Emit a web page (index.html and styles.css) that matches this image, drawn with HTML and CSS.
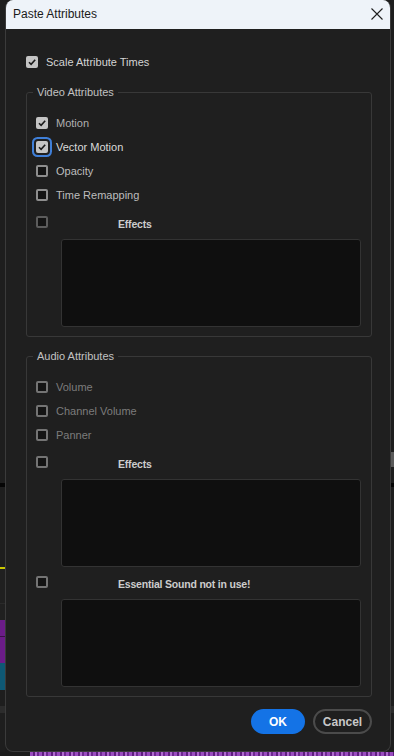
FILE: index.html
```html
<!DOCTYPE html>
<html lang="en">
<head>
    <meta charset="UTF-8">
    <meta name="viewport" content="width=device-width, initial-scale=1.0">
    <title>Paste Attributes</title>
    <link rel="stylesheet" href="styles.css">
</head>
<body>
    <div class="screen">
        <div class="edge edge-left"></div>

        <div class="dialog">
            <div class="titlebar">
                <span class="title">Paste Attributes</span>
                <button class="close" aria-label="Close">
                    <svg width="12" height="12" viewBox="0 0 12 12"><path d="M0.5 0.5 L11.5 11.5 M11.5 0.5 L0.5 11.5" stroke="#1f1f1f" stroke-width="1.1" fill="none"/></svg>
                </button>
            </div>

            <div class="dialog-body">
                <div class="check-row scale">
                    <span class="box checked"><svg viewBox="0 0 12 12"><path d="M3 6.3 L5.1 8.4 L9.2 3.8" /></svg></span>
                    Scale Attribute Times
                </div>

                <fieldset class="group">
                    <legend>Video Attributes</legend>
                    <div class="check-row dim-check">
                        <span class="box checked"><svg viewBox="0 0 12 12"><path d="M3 6.3 L5.1 8.4 L9.2 3.8" /></svg></span>
                        Motion
                    </div>
                    <div class="check-row bright">
                        <span class="box checked focused"><svg viewBox="0 0 12 12"><path d="M3 6.3 L5.1 8.4 L9.2 3.8" /></svg></span>
                        Vector Motion
                    </div>
                    <div class="check-row">
                        <span class="box"></span>
                        Opacity
                    </div>
                    <div class="check-row">
                        <span class="box"></span>
                        Time Remapping
                    </div>
                    <div class="effects-head">
                        <span class="box disabled"></span>
                        <span class="effects-label">Effects</span>
                    </div>
                    <div class="effects-list"></div>
                </fieldset>

                <fieldset class="group audio">
                    <legend>Audio Attributes</legend>
                    <div class="check-row muted">
                        <span class="box muted-box"></span>
                        Volume
                    </div>
                    <div class="check-row muted">
                        <span class="box muted-box"></span>
                        Channel Volume
                    </div>
                    <div class="check-row muted">
                        <span class="box muted-box"></span>
                        Panner
                    </div>
                    <div class="effects-head">
                        <span class="box muted-box"></span>
                        <span class="effects-label">Effects</span>
                    </div>
                    <div class="effects-list"></div>
                    <div class="effects-head">
                        <span class="box muted-box"></span>
                        <span class="effects-label">Essential Sound not in use!</span>
                    </div>
                    <div class="effects-list"></div>
                </fieldset>

                <div class="actions">
                    <button class="btn primary">OK</button>
                    <button class="btn secondary">Cancel</button>
                </div>
            </div>
        </div>

        <div class="edge edge-right"></div>
    </div>
    <div class="waveform"></div>
</body>
</html>
```

FILE: styles.css
```css
body {
    margin: 0;
    background: #1c1c1c;
    font-family: "Liberation Sans", Arial, sans-serif;
    font-size: 11px;
    color: #c4c4c4;
    overflow: hidden;
}
.screen {
    display: flex;
    height: 752px;
}
.edge {
    flex: none;
}
.edge-left {
    width: 5px;
    background: linear-gradient(to bottom,
        #1e1e1e 0, #1e1e1e 483px,
        #050505 483px, #050505 487px,
        #1e1e1e 487px, #1e1e1e 567px,
        #c9c700 567px, #c9c700 569px,
        #202020 569px, #202020 603px,
        #2a2a2a 603px, #2a2a2a 604px,
        #202020 604px, #202020 620px,
        #6b1c88 620px, #6b1c88 636px,
        #3a1048 636px, #3a1048 637px,
        #6b1c88 637px, #6b1c88 663px,
        #0e5874 663px, #0e5874 690px,
        #1e1e1e 690px, #1e1e1e 706px,
        #2c2c2c 706px, #2c2c2c 713px,
        #1e1e1e 713px);
}
.edge-right {
    width: 3px;
    background: linear-gradient(to bottom,
        #1e1e1e 0, #1e1e1e 452px,
        #5a5a5a 452px, #5a5a5a 467px,
        #1e1e1e 467px, #1e1e1e 483px,
        #050505 483px, #050505 487px,
        #1e1e1e 487px, #1e1e1e 706px,
        #2c2c2c 706px, #2c2c2c 713px,
        #1e1e1e 713px);
}
.dialog {
    width: 386px;
    box-sizing: border-box;
    background: #1f1f1f;
    border: 1px solid #3b3b3b;
    border-top: 0;
    border-radius: 8px;
    overflow: hidden;
    display: flex;
    flex-direction: column;
}
.titlebar {
    height: 29px;
    flex: none;
    background: #eef3f9;
    display: flex;
    align-items: center;
    justify-content: space-between;
    padding: 0 7px 0 7px;
}
.title {
    font-size: 12px;
    color: #1a1a1a;
    margin-top: -1px;
}
.close {
    border: none;
    background: none;
    padding: 0;
    width: 12px;
    height: 12px;
    display: flex;
    margin-top: -2px;
}
.dialog-body {
    padding: 21px 18px 0 20px;
}
.check-row {
    display: flex;
    align-items: center;
    gap: 8px;
    height: 24px;
    color: #bdbdbd;
}
.check-row.scale {
    color: #d4d4d4;
}
.check-row.dim-check {
    color: #b0b0b0;
}
.check-row.bright {
    color: #dadada;
}
.check-row.muted {
    color: #7c7c7c;
}
.box {
    width: 12px;
    height: 12px;
    box-sizing: border-box;
    border: 2px solid #8e8e8e;
    border-radius: 2px;
    background: #141414;
    flex: none;
    display: flex;
}
.box.checked {
    border: none;
    background: #c4c4c4;
}
.box.checked svg {
    width: 12px;
    height: 12px;
}
.box.checked path {
    fill: none;
    stroke: #1a1a1a;
    stroke-width: 1.6;
}
.box.focused {
    box-shadow: 0 0 0 2px #1f1f1f, 0 0 0 4px #3f7fd8;
    border-radius: 2px;
}
.box.disabled {
    border-color: #5c5c5c;
}
.box.muted-box {
    border-color: #747474;
}
.group {
    width: 346px;
    box-sizing: border-box;
    margin: 11px 0 0;
    padding: 0 10px 9px 9px;
    border: 1px solid #383838;
    border-radius: 3px;
    min-width: 0;
}
.group.audio {
    margin-top: 12px;
}
.group legend {
    padding: 0 4px;
    margin-left: -3px;
    line-height: 14px;
    color: #c2c2c2;
}
.group legend + .check-row {
    margin-top: 12px;
}
.effects-head {
    display: flex;
    align-items: flex-start;
    margin-top: 9px;
}
.effects-label {
    margin-left: 70px;
    margin-top: 1px;
    line-height: 14px;
    font-size: 10.5px;
    font-weight: bold;
    letter-spacing: -0.2px;
    color: #cdcdcd;
}
.effects-list {
    margin: 8px 0 0 25px;
    height: 88px;
    box-sizing: border-box;
    background: #0f0f0f;
    border: 1px solid #333333;
    border-radius: 3px;
}
.actions {
    display: flex;
    justify-content: flex-end;
    gap: 8px;
    width: 346px;
    margin-top: 12px;
}
.btn {
    height: 25px;
    box-sizing: border-box;
    border-radius: 13px;
    font-family: "Liberation Sans", Arial, sans-serif;
    font-size: 12px;
    font-weight: bold;
    cursor: pointer;
}
.btn.primary {
    width: 54px;
    background: #1473e6;
    color: #ffffff;
    border: none;
}
.btn.secondary {
    width: 59px;
    background: transparent;
    color: #c8c8c8;
    border: 2px solid #4b4b4b;
}
.waveform {
    height: 4px;
    margin-left: 30px;
    background: repeating-linear-gradient(to right,
        #9a4cc0 0, #9a4cc0 3px,
        #5e1d7e 3px, #5e1d7e 5px,
        #b06ad0 5px, #b06ad0 7px,
        #6d2890 7px, #6d2890 9px);
}
```
